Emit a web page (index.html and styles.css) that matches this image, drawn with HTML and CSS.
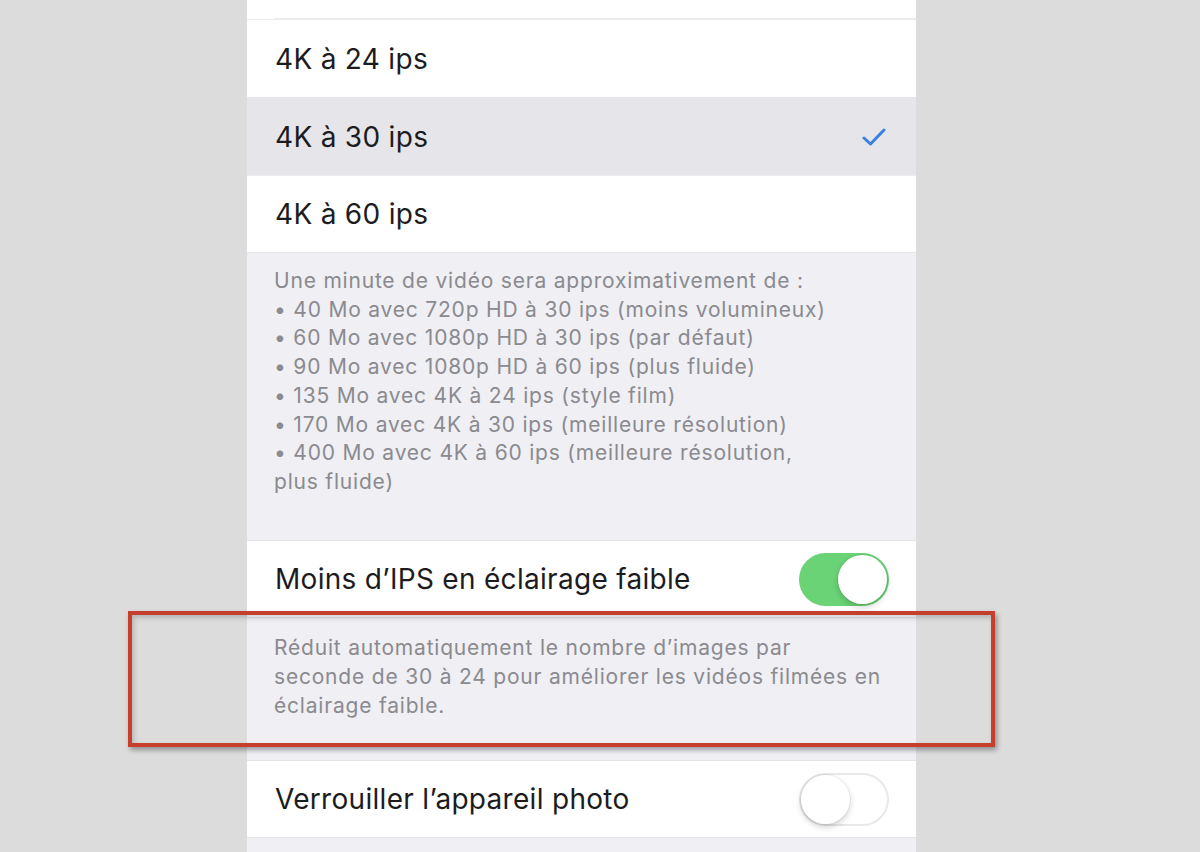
FILE: index.html
```html
<!DOCTYPE html>
<html>
<head>
    <title>Format vidéo</title>
    <meta name="viewport" content="width=device-width, initial-scale=1.0">
    <link rel="stylesheet" href="styles.css">
</head>
<body>
    <div id="screen">
        <div class="cell cell-top"><span class="sep"></span></div>
        <div class="cell"><span class="label">4K à 24 ips</span></div>
        <div class="cell selected">
            <span class="label">4K à 30 ips</span>
            <svg class="check" width="24" height="20" viewBox="0 0 24 20">
                <path d="M2 11 L8.5 17 L22 3" fill="none" stroke="#3b7fe0" stroke-width="3" stroke-linecap="round" stroke-linejoin="round"/>
            </svg>
        </div>
        <div class="cell last"><span class="label">4K à 60 ips</span></div>
        <div class="footer footer-sizes">
            Une minute de vidéo sera approximativement de :<br>
            • 40 Mo avec 720p HD à 30 ips (moins volumineux)<br>
            • 60 Mo avec 1080p HD à 30 ips (par défaut)<br>
            • 90 Mo avec 1080p HD à 60 ips (plus fluide)<br>
            • 135 Mo avec 4K à 24 ips (style film)<br>
            • 170 Mo avec 4K à 30 ips (meilleure résolution)<br>
            • 400 Mo avec 4K à 60 ips (meilleure résolution,<br>
            plus fluide)
        </div>
        <div class="cell single">
            <span class="label">Moins d’IPS en éclairage faible</span>
            <span class="switch on"><span class="knob"></span></span>
        </div>
        <div class="footer footer-low">
            Réduit automatiquement le nombre d’images par<br>
            seconde de 30 à 24 pour améliorer les vidéos filmées en<br>
            éclairage faible.
        </div>
        <div class="cell single">
            <span class="label">Verrouiller l’appareil photo</span>
            <span class="switch"><span class="knob"></span></span>
        </div>
        <div class="footer"></div>
    </div>
    <div id="highlight"></div>
</body>
</html>
```

FILE: styles.css
```css
body {
    font-family: Inter, "Noto Sans", sans-serif;
    background-color: #dcdcdc;
    margin: 0;
    padding: 0;
    overflow: hidden;
    height: 852px;
    position: relative;
}
#screen {
    width: 669px;
    height: 852px;
    margin-left: 247px;
    background-color: #efeff4;
    display: flex;
    flex-direction: column;
}
.cell {
    height: 78px;
    flex-shrink: 0;
    background-color: #fff;
    display: flex;
    align-items: center;
    justify-content: space-between;
    padding: 0 27px 0 28px;
    position: relative;
    box-sizing: border-box;
    border-top: 1px solid #ececf0;
}
.cell-top {
    height: 19px;
    border-top: none;
}
.cell-top .sep {
    position: absolute;
    left: 27px;
    right: 0;
    bottom: 0;
    height: 1px;
    background-color: #ececf0;
}
.cell.selected {
    background-color: #e6e6ea;
    border-top-color: #e6e6ea;
}
.cell.last {
    border-bottom: 1px solid #e3e3e8;
}
.cell.single {
    border-top: 1px solid #e3e3e8;
    border-bottom: 1px solid #e3e3e8;
}
.label {
    font-size: 28px;
    color: #1c1c1e;
    letter-spacing: 0.3px;
}
.check {
    margin-right: 3px;
}
.footer {
    flex-shrink: 0;
    color: #8a8a8f;
    font-size: 21px;
    line-height: 28.7px;
    padding: 14px 28px 0 27px;
    letter-spacing: 0.8px;
}
.footer-sizes {
    height: 273px;
}
.footer-low {
    height: 127px;
    padding-top: 15px;
    line-height: 29px;
}
.switch {
    width: 90px;
    height: 53px;
    border-radius: 27px;
    background-color: #fff;
    box-shadow: inset 0 0 0 2px #e8e8ea;
    position: relative;
}
.switch.on {
    background-color: #69d375;
    box-shadow: none;
}
.knob {
    position: absolute;
    top: 2px;
    left: 2px;
    width: 49px;
    height: 49px;
    border-radius: 50%;
    background-color: #fff;
    box-shadow: 0 3px 6px rgba(0, 0, 0, 0.18), 0 0 0 1px rgba(0, 0, 0, 0.05);
}
.switch.on .knob {
    left: 39px;
}
#highlight {
    position: absolute;
    left: 128px;
    top: 611px;
    width: 859px;
    height: 128px;
    border: 4px solid #c63f2c;
    box-shadow: 2px 3px 5px rgba(0, 0, 0, 0.35), inset 2px 3px 5px rgba(0, 0, 0, 0.18);
}
```
